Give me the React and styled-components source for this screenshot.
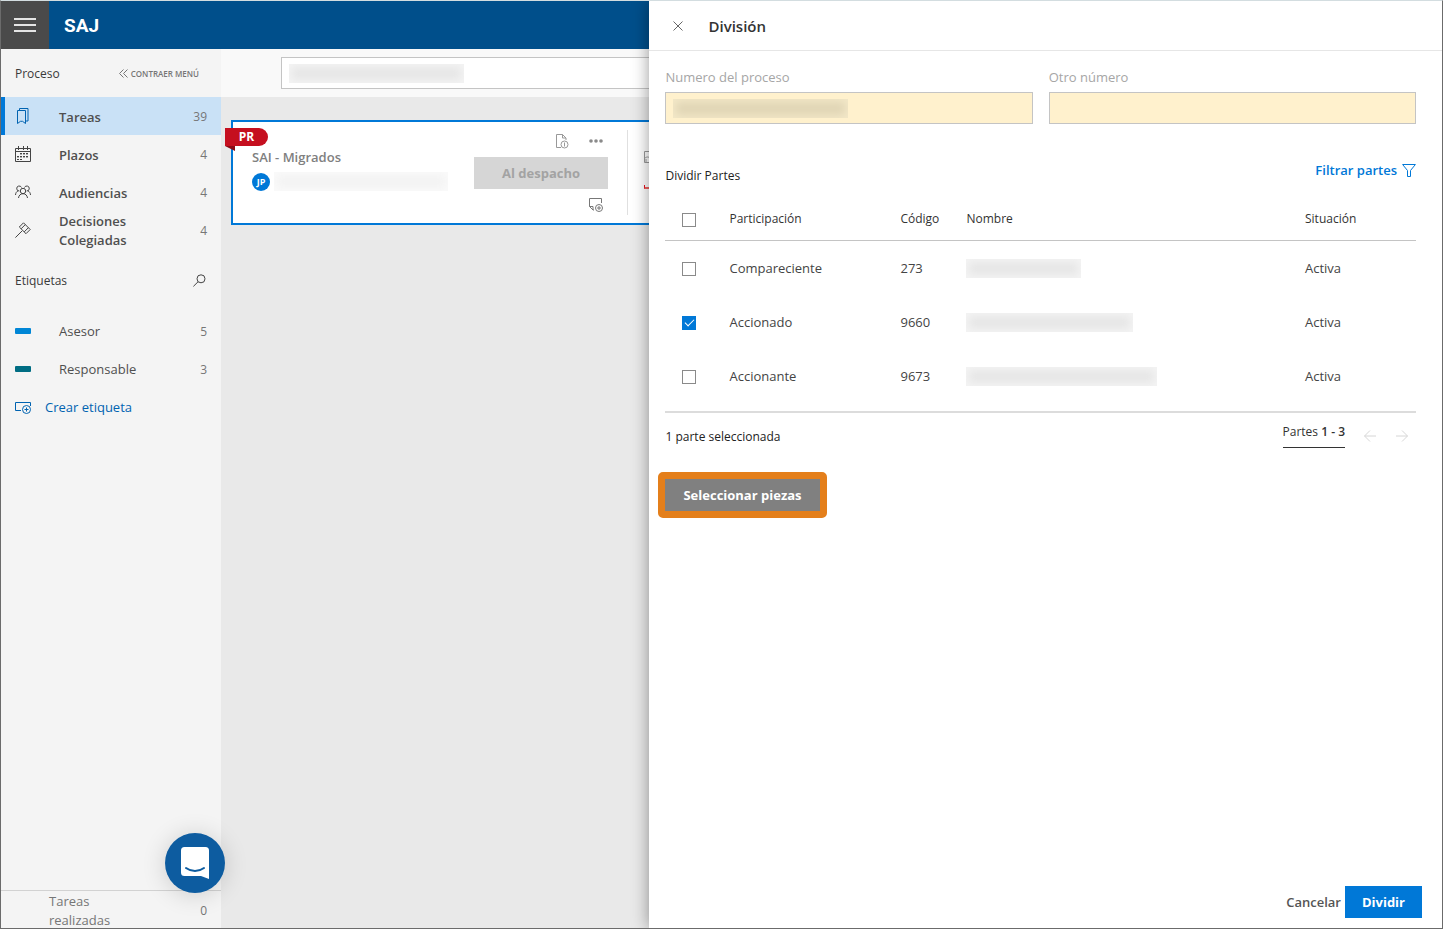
import React, { useState } from 'react'
import styled, { createGlobalStyle } from 'styled-components'

const PARTES = [
    { id: 1, participacion: 'Compareciente', codigo: '273', ancho: 115, situacion: 'Activa' },
    { id: 2, participacion: 'Accionado', codigo: '9660', ancho: 167, situacion: 'Activa' },
    { id: 3, participacion: 'Accionante', codigo: '9673', ancho: 191, situacion: 'Activa' },
]

const TareasIcon = () => (
    <svg width="16" height="18" viewBox="0 0 16 18" fill="none" stroke="#0063b1">
        <path d="M2.500 3.500h8v13l-3-2.200H5.500l-3 2.200z" />
        <path d="M4.500 3V1.500h8.500v12.500h-2.500" />
    </svg>
)

const PlazosIcon = () => (
    <svg width="16" height="17" viewBox="0 0 16 17" fill="none" stroke="#444">
        <path d="M.5 2.500h15v13H.5zM.5 5.500h15M3.500 0v4M8.500 0v4M12.500 0v4" />
        <path d="M5 7.500h9M2 10.500h12M2 13.500h6" strokeDasharray="2 1" />
        <path d="M5 8.500h9M2 11.500h12" strokeDasharray="2 1" strokeOpacity=".4" />
    </svg>
)

const AudienciasIcon = () => (
    <svg width="16" height="14" viewBox="0 0 16 14" fill="none" stroke="#444">
        <circle cx="8" cy="6" r="2.700" />
        <path d="M3.500 13c.3-2.600 2-4.300 4.500-4.300s4.200 1.700 4.500 4.300" />
        <path d="M4.300 6A2.500 2.500 0 1 1 6.500 2.500M11.700 6A2.500 2.500 0 1 0 9.500 2.500" />
        <path d="M.5 10c.1-2 1-3.500 2.700-4.200M15.500 10c-.1-2-1-3.500-2.700-4.200" />
    </svg>
)

const DecisionesIcon = () => (
    <svg width="16" height="16" viewBox="0 0 16 16" fill="none" stroke="#444">
        <path d="M8.500.8l6.700 6.700M4.300 5l6.700 6.700M8.500.8L4.300 5M15.200 7.500L11 11.700M10.300 2.600L6.100 6.800M13.400 5.700L9.200 9.900M7.200 8.800L.4 15.600" />
    </svg>
)

const EtiquetaIcon = () => (
    <svg width="17" height="13" viewBox="0 0 17 13" fill="none" stroke="#0063b1">
        <path d="M6 9.500H.5v-8h15V5" />
        <circle cx="11.500" cy="8.500" r="4" />
        <path d="M9.500 8.500h4M11.500 6.500v4" />
    </svg>
)

const BuscarIcon = () => (
    <svg width="13" height="13" viewBox="0 0 13 13" fill="none" stroke="#444">
        <circle cx="8" cy="4.800" r="4" />
        <path d="M5 7.800L.4 12.400" />
    </svg>
)

const ContraerIcon = () => (
    <svg width="9" height="9" viewBox="0 0 9 9" fill="none" stroke="#767676">
        <path d="M4.500.5l-4 4 4 4M8.500.5l-4 4 4 4" />
    </svg>
)

const DocumentoIcon = () => (
    <svg width="13" height="15" viewBox="0 0 13 15" fill="none" stroke="#999">
        <path d="M5 13.500H.5V.5h6L10 4v2M6.500.5V4H10" />
        <circle cx="8.500" cy="10.500" r="3.500" />
        <path d="M8.500 8.500v4" />
    </svg>
)

const PuntosIcon = () => (
    <svg width="14" height="4" viewBox="0 0 14 4" fill="#8a8a8a">
        <circle cx="2" cy="2" r="1.800" />
        <circle cx="7" cy="2" r="1.800" />
        <circle cx="12" cy="2" r="1.800" />
    </svg>
)

const NotaIcon = () => (
    <svg width="14" height="14" viewBox="0 0 14 14" fill="none" stroke="#777">
        <path d="M12.500 5V.5H.5v8L4 12V8.500H.5M4 12h1" />
        <circle cx="10" cy="10" r="3.500" />
        <path d="M8 10h4M10 8v4" />
    </svg>
)

const ImagenIcon = () => (
    <svg width="14" height="12" viewBox="0 0 14 12" fill="none" stroke="#999">
        <path d="M.5.5h13v11H.5zM.5 7.500c2-2 4-2 6 0M2 11V8" />
    </svg>
)

const CerrarIcon = () => (
    <svg width="10" height="10" viewBox="0 0 10 10" fill="none" stroke="#666">
        <path d="M.5.5l9 9M9.500.5l-9 9" />
    </svg>
)

const FiltroIcon = () => (
    <svg width="14" height="13" viewBox="0 0 14 13" fill="none" stroke="#0078d7">
        <path d="M.6.5h12.800L8.500 6.500v6h-3v-6z" />
    </svg>
)

const FlechaIcon = ({ derecha }) => (
    <svg width="12" height="12" viewBox="0 0 12 12" fill="none" stroke="#d6d6d6">
        {derecha
            ? <path d="M0 6h11.500M6 .5L11.500 6 6 11.500" />
            : <path d="M12 6H.5M6 .5L.5 6 6 11.500" />}
    </svg>
)

const ChatIcon = () => (
    <svg width="28" height="32" viewBox="0 0 28 32">
        <path d="M3.500 0h21A3.500 3.500 0 0 1 28 3.500V32l-8-3H3.500A3.500 3.500 0 0 1 0 25.500v-22A3.500 3.500 0 0 1 3.500 0z" fill="#fff" />
        <path d="M5 21c5.500 4 12.500 4 18 0" fill="none" stroke="#0d5ca0" strokeWidth="2" strokeLinecap="round" />
    </svg>
)

const MENU = [
    { label: 'Tareas', total: 39, icon: <TareasIcon />, active: true },
    { label: 'Plazos', total: 4, icon: <PlazosIcon /> },
    { label: 'Audiencias', total: 4, icon: <AudienciasIcon /> },
    { label: 'Decisiones Colegiadas', total: 4, icon: <DecisionesIcon /> },
]

const ETIQUETAS = [
    { label: 'Asesor', total: 5, color: '#0086d6' },
    { label: 'Responsable', total: 3, color: '#006d83' },
]

const Sidebar = () => (
    <SidebarContainer>
        <SidebarHeader>
            <SmallTitle>Proceso</SmallTitle>
            <CollapseButton><ContraerIcon />CONTRAER MENÚ</CollapseButton>
        </SidebarHeader>
        <nav>
            {MENU.map(({ label, total, icon, active }) => (
                <MenuItem href="#" key={label} $active={active}>
                    <MenuIcon>{icon}</MenuIcon>
                    <MenuLabel $bold>{label}</MenuLabel>
                    <Total>{total}</Total>
                </MenuItem>
            ))}
        </nav>
        <TagsHeader>
            <SmallTitle>Etiquetas</SmallTitle>
            <IconButton aria-label="Buscar etiqueta"><BuscarIcon /></IconButton>
        </TagsHeader>
        {ETIQUETAS.map(({ label, total, color }) => (
            <MenuItem href="#" key={label}>
                <MenuIcon><TagColor $color={color} /></MenuIcon>
                <MenuLabel>{label}</MenuLabel>
                <Total>{total}</Total>
            </MenuItem>
        ))}
        <CreateTag><EtiquetaIcon />Crear etiqueta</CreateTag>
        <SidebarFooter href="#">
            <DoneLabel>Tareas realizadas</DoneLabel>
            <Total>0</Total>
        </SidebarFooter>
    </SidebarContainer>
)

const TaskCard = () => (
    <Card>
        <Ribbon>PR</Ribbon>
        <CardInfo>
            <CardTitle>SAI - Migrados</CardTitle>
            <Person>
                <Avatar>JP</Avatar>
                <Redacted $width={174} $light />
            </Person>
        </CardInfo>
        <CardActions>
            <CardIcons>
                <IconButton aria-label="Documento"><DocumentoIcon /></IconButton>
                <IconButton aria-label="Más opciones"><PuntosIcon /></IconButton>
            </CardIcons>
            <DispatchButton>Al despacho</DispatchButton>
            <CardIcons>
                <IconButton aria-label="Agregar nota"><NotaIcon /></IconButton>
            </CardIcons>
        </CardActions>
        <CardDetail>
            <ImagenIcon />
            <Alert />
        </CardDetail>
    </Card>
)

const DivisionPanel = () => {
    const [selected, setSelected] = useState([2])

    const toggle = (id) => {
        setSelected(selected.includes(id) ? selected.filter(s => s !== id) : [...selected, id])
    }

    const toggleAll = () => {
        setSelected(selected.length === PARTES.length ? [] : PARTES.map(p => p.id))
    }

    return (
        <Panel>
            <PanelHeader>
                <IconButton aria-label="Cerrar"><CerrarIcon /></IconButton>
                <PanelTitle>División</PanelTitle>
            </PanelHeader>
            <PanelBody>
                <Fields>
                    <Field>
                        <Label htmlFor="numero">Numero del proceso</Label>
                        <InputWrapper>
                            <Input id="numero" />
                            <InputMask><Redacted $width={175} $warm /></InputMask>
                        </InputWrapper>
                    </Field>
                    <Field>
                        <Label htmlFor="otro">Otro número</Label>
                        <Input id="otro" />
                    </Field>
                </Fields>
                <TableTitle>
                    <SmallTitle $dark>Dividir Partes</SmallTitle>
                    <FilterButton>Filtrar partes<FiltroIcon /></FilterButton>
                </TableTitle>
                <Table>
                    <thead>
                        <tr>
                            <Th $width={64}>
                                <Checkbox
                                    type="checkbox"
                                    aria-label="Seleccionar todas"
                                    checked={selected.length === PARTES.length}
                                    onChange={toggleAll}
                                />
                            </Th>
                            <Th $width={171}>Participación</Th>
                            <Th $width={66}>Código</Th>
                            <Th>Nombre</Th>
                            <Th $width={111}>Situación</Th>
                        </tr>
                    </thead>
                    <tbody>
                        {PARTES.map(parte => (
                            <tr key={parte.id}>
                                <Td>
                                    <Checkbox
                                        type="checkbox"
                                        aria-label={parte.participacion}
                                        checked={selected.includes(parte.id)}
                                        onChange={() => toggle(parte.id)}
                                    />
                                </Td>
                                <Td>{parte.participacion}</Td>
                                <Td>{parte.codigo}</Td>
                                <Td><Redacted $width={parte.ancho} /></Td>
                                <Td>{parte.situacion}</Td>
                            </tr>
                        ))}
                    </tbody>
                </Table>
                <TableFooter>
                    <SmallTitle $dark>{selected.length} parte seleccionada</SmallTitle>
                    <Pager>
                        <PageRange>Partes <b>1 - 3</b></PageRange>
                        <IconButton aria-label="Anterior" disabled><FlechaIcon /></IconButton>
                        <IconButton aria-label="Siguiente" disabled><FlechaIcon derecha /></IconButton>
                    </Pager>
                </TableFooter>
                <Highlight>
                    <SelectButton>Seleccionar piezas</SelectButton>
                </Highlight>
            </PanelBody>
            <PanelFooter>
                <CancelButton>Cancelar</CancelButton>
                <PrimaryButton>Dividir</PrimaryButton>
            </PanelFooter>
        </Panel>
    )
}

const App = () => {
    return (
        <Container>
            <GlobalStyle />
            <Header>
                <MenuButton aria-label="Menú"><Bar /><Bar /><Bar /></MenuButton>
                <Logo>SAJ</Logo>
            </Header>
            <Wrapper>
                <Sidebar />
                <Main>
                    <Toolbar>
                        <SearchBox>
                            <SearchInput aria-label="Buscar proceso" />
                            <InputMask><Redacted $width={175} /></InputMask>
                        </SearchBox>
                    </Toolbar>
                    <TaskCard />
                </Main>
            </Wrapper>
            <DivisionPanel />
            <ChatButton aria-label="Chat"><ChatIcon /></ChatButton>
        </Container>
    )
}

export default App

const GlobalStyle = createGlobalStyle`
    * {
        box-sizing: border-box;
    }
    body {
        margin: 0;
        overflow: hidden;
    }
    body, button, input {
        font-family: "Open Sans", "Noto Sans", sans-serif;
        font-size: 13px;
    }
    button {
        padding: 0;
        border: none;
        background: none;
        cursor: pointer;
    }
    svg {
        display: block;
        flex-shrink: 0;
    }
`

const Container = styled.div`
    position: relative;
    display: flex;
    flex-direction: column;
    height: 100vh;
    border: 1px solid #6b6b6b;
    border-top-color: #d3dde0;
    overflow: hidden;
`

const Header = styled.header`
    display: flex;
    align-items: center;
    height: 48px;
    flex-shrink: 0;
    background-color: #004f8b;
`

const MenuButton = styled.button`
    display: flex;
    flex-direction: column;
    align-items: center;
    justify-content: center;
    gap: 4px;
    width: 48px;
    height: 48px;
    background-color: #4a4a4a;
`

const Bar = styled.span`
    width: 22px;
    height: 2px;
    background-color: #e4e4e4;
`

const Logo = styled.span`
    margin-left: 15px;
    color: white;
    font-family: Roboto, sans-serif;
    font-size: 19px;
    font-weight: 700;
`

const Wrapper = styled.div`
    flex: 1;
    display: flex;
    min-height: 0;
`

const SidebarContainer = styled.aside`
    display: flex;
    flex-direction: column;
    width: 220px;
    flex-shrink: 0;
    background-color: #f4f4f4;
`

const SidebarHeader = styled.div`
    display: flex;
    align-items: center;
    justify-content: space-between;
    height: 48px;
    padding: 0 22px 0 14px;
`

const TagsHeader = styled(SidebarHeader)`
    height: 63px;
    padding-right: 15px;
`

const SmallTitle = styled.h2`
    margin: 0;
    color: ${({ $dark }) => $dark ? '#222' : '#3a3a3a'};
    font-size: 12px;
    font-weight: 500;
    line-height: 17px;
`

const CollapseButton = styled.button`
    display: flex;
    align-items: center;
    gap: 3px;
    color: #767676;
    font-size: 8px;
    font-weight: 600;
`

const IconButton = styled.button`
    display: flex;
    align-items: center;
    justify-content: center;
    min-width: 14px;
    min-height: 14px;
`

const MenuItem = styled.a`
    display: flex;
    align-items: center;
    height: 38px;
    padding-right: 14px;
    border-left: 4px solid ${({ $active }) => $active ? '#0078d7' : 'transparent'};
    background-color: ${({ $active }) => $active ? '#c9e1f6' : 'transparent'};
    text-decoration: none;
`

const MenuIcon = styled.span`
    display: flex;
    width: 54px;
    padding-left: 10px;
`

const MenuLabel = styled.span`
    flex: 1;
    max-width: 100px;
    margin-right: auto;
    padding-top: ${({ $bold }) => $bold ? '2px' : 0};
    color: #4f4f4f;
    font-size: 13px;
    font-weight: ${({ $bold }) => $bold ? 600 : 400};
    line-height: 19px;
`

const Total = styled.span`
    color: #767676;
    font-size: 12px;
`

const TagColor = styled.span`
    width: 16px;
    height: 6px;
    border-radius: 1px;
    background-color: ${({ $color }) => $color};
`

const CreateTag = styled.button`
    display: flex;
    align-items: center;
    gap: 13px;
    height: 38px;
    padding-left: 14px;
    color: #0063b1;
`

const SidebarFooter = styled.a`
    display: flex;
    align-items: center;
    justify-content: space-between;
    height: 38px;
    margin-top: auto;
    padding: 2px 14px 0 48px;
    border-top: 1px solid #d2d2d2;
    text-decoration: none;
`

const DoneLabel = styled.span`
    width: 80px;
    color: #767676;
    line-height: 19px;
`

const Main = styled.main`
    flex: 1;
    min-width: 0;
    background-color: #e9e9e9;
`

const Toolbar = styled.div`
    height: 48px;
    padding: 8px 16px 8px 60px;
    background-color: #f9f9f9;
`

const InputWrapper = styled.div`
    position: relative;
`

const SearchBox = styled(InputWrapper)`
    height: 32px;
`

const SearchInput = styled.input`
    width: 100%;
    height: 32px;
    padding: 0 8px;
    border: 1px solid #c4c4c4;
    background-color: white;
`

const InputMask = styled.div`
    position: absolute;
    top: 7px;
    left: 8px;
    pointer-events: none;
`

const tone = ({ $warm, $light }) => {
    if ($warm) return ['#e0d5b5', '#f3e8c8']
    if ($light) return ['#f3f3f3', '#fafafa']
    return ['#e6e6e6', '#f4f4f4']
}

const Redacted = styled.div`
    width: ${({ $width }) => $width}px;
    height: 19px;
    background-color: ${props => tone(props)[0]};
    box-shadow: inset 0 0 8px 3px ${props => tone(props)[1]};
`

const Card = styled.article`
    position: relative;
    display: flex;
    height: 105px;
    margin: 23px 16px 0 10px;
    padding: 8px 0 8px 19px;
    border: 2px solid #0078d7;
    background-color: white;
`

const Ribbon = styled.span`
    position: absolute;
    top: 6px;
    left: -8px;
    width: 43px;
    height: 18px;
    border-radius: 0 9px 9px 0;
    background-color: #c50f1f;
    color: white;
    font-size: 12px;
    font-weight: 700;
    line-height: 18px;
    text-align: center;

    &::after {
        content: "";
        position: absolute;
        top: 18px;
        left: 0;
        border-top: 5px solid #8c0a15;
        border-left: 10px solid transparent;
    }
`

const CardInfo = styled.div`
    width: 222px;
    padding-top: 17px;
`

const CardTitle = styled.h3`
    margin: 0;
    color: #808080;
    font-size: 13px;
    font-weight: 600;
    line-height: 20px;
`

const Person = styled.div`
    display: flex;
    align-items: center;
    gap: 4px;
    margin-top: 5px;
`

const Avatar = styled.span`
    width: 18px;
    height: 18px;
    border-radius: 50%;
    background-color: #0078d7;
    color: white;
    font-size: 9px;
    font-weight: 700;
    line-height: 18px;
    text-align: center;
`

const CardActions = styled.div`
    display: flex;
    flex-direction: column;
    gap: 7px;
    width: 154px;
    padding: 2px 19px 0 0;
    border-right: 1px solid #e0e0e0;
`

const CardIcons = styled.div`
    display: flex;
    align-items: center;
    justify-content: flex-end;
    gap: 20px;
    height: 18px;
    padding-right: 5px;
`

const DispatchButton = styled.button`
    height: 32px;
    flex-shrink: 0;
    background-color: #d6d6d6;
    color: #a3a3a3;
    font-weight: 700;
`

const CardDetail = styled.div`
    padding: 21px 0 0 16px;
`

const Alert = styled.div`
    width: 14px;
    height: 4px;
    margin-top: 22px;
    border-left: 1px solid #e81123;
    border-bottom: 2px solid #f0625f;
`

const Panel = styled.section`
    position: absolute;
    top: 0;
    right: 0;
    bottom: 0;
    display: flex;
    flex-direction: column;
    width: 55%;
    background-color: white;
    box-shadow: 0 0 16px rgba(0, 0, 0, 0.4);
`

const PanelHeader = styled.header`
    display: flex;
    align-items: center;
    gap: 23px;
    height: 50px;
    padding-left: 22px;
    border-bottom: 1px solid #e6e6e6;
`

const PanelTitle = styled.h1`
    margin: 0;
    color: #333;
    font-size: 15px;
    font-weight: 600;
`

const PanelBody = styled.div`
    flex: 1;
    padding: 16px 26px 0 16px;
`

const Fields = styled.div`
    display: flex;
    gap: 16px;
`

const Field = styled.div`
    flex: 1;
`

const Label = styled.label`
    display: block;
    height: 25px;
    color: #a6a6a6;
    line-height: 20px;
`

const Input = styled.input`
    display: block;
    width: 100%;
    height: 32px;
    padding: 0 8px;
    border: 1px solid #c4c4c4;
    background-color: #fff1cd;
`

const TableTitle = styled.div`
    display: flex;
    align-items: flex-end;
    justify-content: space-between;
    height: 60px;
`

const FilterButton = styled.button`
    display: flex;
    align-items: center;
    gap: 5px;
    height: 28px;
    color: #0078d7;
    font-weight: 600;
`

const Table = styled.table`
    width: 100%;
    table-layout: fixed;
    border-collapse: collapse;
`

const Th = styled.th`
    width: ${({ $width }) => $width ? `${$width}px` : 'auto'};
    height: 56px;
    padding: 14px 0 0;
    border-bottom: 1px solid #c4c4c4;
    color: #333;
    font-size: 12px;
    font-weight: 500;
    text-align: left;
`

const Td = styled.td`
    height: 54px;
    padding: 2px 0 0;
    color: #444;
`

const Checkbox = styled.input`
    appearance: none;
    display: block;
    width: 14px;
    height: 14px;
    margin: 2px 0 0 17px;
    border: 1px solid #8a8a8a;
    background-color: white;

    &:checked {
        border-color: #0078d7;
        background-color: #0078d7;
    }

    &:checked::after {
        content: "";
        display: block;
        width: 8px;
        height: 4px;
        margin: 2px 0 0 2px;
        border-left: 1px solid white;
        border-bottom: 1px solid white;
        transform: rotate(-45deg);
    }
`

const TableFooter = styled.div`
    display: flex;
    align-items: center;
    justify-content: space-between;
    height: 48px;
    margin-top: 9px;
    border-top: 2px solid #dcdcdc;
`

const Pager = styled.div`
    display: flex;
    align-items: center;
    gap: 18px;
    padding-right: 7px;
`

const PageRange = styled.span`
    height: 24px;
    border-bottom: 1px solid #333;
    color: #333;
    font-size: 12px;
    line-height: 16px;

    b {
        font-weight: 600;
    }
`

const Highlight = styled.div`
    width: fit-content;
    margin: 13px 0 0 -7px;
    border: 7px solid #e47f1b;
    border-radius: 5px;
`

const SelectButton = styled.button`
    display: block;
    height: 32px;
    padding: 0 18px;
    background-color: #808080;
    color: white;
    font-weight: 700;
`

const PanelFooter = styled.footer`
    display: flex;
    justify-content: flex-end;
    gap: 4px;
    padding: 0 20px 10px;
`

const CancelButton = styled.button`
    height: 32px;
    color: #555;
    font-weight: 600;
`

const PrimaryButton = styled.button`
    height: 32px;
    padding: 0 17px;
    background-color: #0078d7;
    color: white;
    font-weight: 700;
`

const ChatButton = styled.button`
    position: fixed;
    left: 165px;
    bottom: 36px;
    display: flex;
    align-items: center;
    justify-content: center;
    width: 60px;
    height: 60px;
    border-radius: 50%;
    background-color: #0d5ca0;
    box-shadow: 0 2px 24px rgba(0, 0, 0, 0.16);
`
